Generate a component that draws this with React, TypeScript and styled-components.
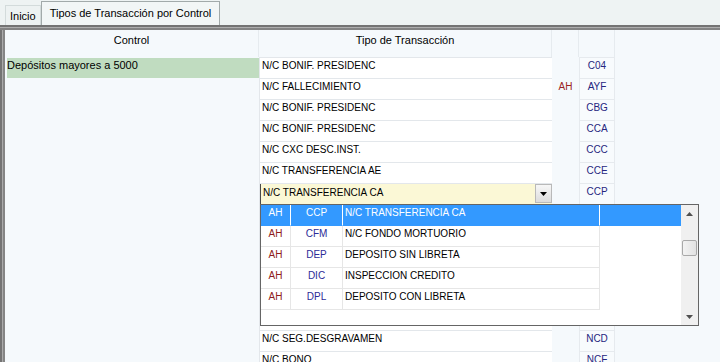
import React from 'react';
import styled, { createGlobalStyle } from 'styled-components';

const Global = createGlobalStyle`
  html, body { margin: 0; padding: 0; background: #eef3f3; overflow: hidden; }
  body { font-family: "Liberation Sans", Arial, sans-serif; font-size: 11px; color: #000; }
  #root { width: 720px; height: 362px; overflow: hidden; }
  * { box-sizing: border-box; }
`;

const Page = styled.div`
  width: 720px;
  height: 362px;
  display: flex;
  flex-direction: column;
  overflow: hidden;
  background: #eef3f3;
`;

const TabStrip = styled.div`
  height: 25px;
  flex-shrink: 0;
  display: flex;
  align-items: flex-end;
  padding-left: 5px;
`;

const Tab = styled.div<{ $active?: boolean }>`
  height: ${(p) => (p.$active ? 24 : 20)}px;
  padding: ${(p) => (p.$active ? '0 8px 2px 8px' : '0 4px')};
  display: flex;
  align-items: center;
  border: 1px solid ${(p) => (p.$active ? '#a2aaaa' : '#d3dbdb')};
  border-bottom: none;
  background: ${(p) => (p.$active ? '#f2f6f6' : '#edf2f2')};
  color: #000;
  font-size: 11px;
  white-space: nowrap;
`;

const Separator = styled.div`
  height: 5px;
  flex-shrink: 0;
  border-top: 2px solid #737373;
  border-bottom: 2px solid #838383;
  background: #adadad;
`;

const Panel = styled.div`
  flex: 1;
  display: flex;
  min-height: 0;
  border-left: 2px solid #747474;
`;

const PanelInnerEdge = styled.div`
  width: 3px;
  flex-shrink: 0;
  border-left: 1px solid #ababab;
  border-right: 2px solid #858585;
`;

const Grid = styled.div`
  flex: 1;
  display: flex;
  flex-direction: column;
  background: #f5f9fc;
  min-width: 0;
`;

const columns = '254px 293px 27px 36px 1fr';

const HeaderRow = styled.div`
  display: grid;
  grid-template-columns: ${columns};
  height: 27px;
  flex-shrink: 0;
`;

const HeaderCell = styled.div<{ $last?: boolean }>`
  text-align: center;
  line-height: 21px;
  font-size: 11px;
  color: #000;
  border-right: ${(p) => (p.$last ? 'none' : '1px solid #e6ebef')};
`;

const Row = styled.div`
  display: grid;
  grid-template-columns: ${columns};
  height: 21px;
  flex-shrink: 0;
`;

const ControlCell = styled.div<{ $highlight?: boolean }>`
  margin-left: 2px;
  border-top: 1px solid transparent;
  background: ${(p) => (p.$highlight ? '#c0dcc0' : 'transparent')};
  background-clip: padding-box;
  font-size: 11px;
  line-height: 15px;
  white-space: nowrap;
  overflow: hidden;
`;

const TipoCell = styled.div<{ $flush?: boolean }>`
  position: relative;
  border-top: 1px solid #e3e7eb;
  border-left: 1px solid #e3e7eb;
  background: #fff;
  padding-left: ${(p) => (p.$flush ? 0 : 2)}px;
  font-size: 10px;
  line-height: 15px;
  white-space: nowrap;
`;

const FlagCell = styled.div`
  text-align: center;
  font-size: 10px;
  line-height: 16px;
  color: #9a1f1f;
  border-top: 1px solid transparent;
`;

const CodeCell = styled.div`
  text-align: center;
  font-size: 10px;
  line-height: 15px;
  color: #262680;
  background: #f8fbfd;
  border-top: 1px solid #e6eaee;
  border-left: 1px solid #e6eaee;
  border-right: 1px solid #e6eaee;
`;

const Filler = styled.div``;

const Editor = styled.div`
  position: relative;
  height: 100%;
  display: flex;
  align-items: center;
  background: #fbf8d6;
  border-left: 1px solid #4a4a4a;
`;

const EditorText = styled.span`
  flex: 1;
  align-self: flex-start;
  padding: 1px 0 0 2px;
  font-size: 10px;
  line-height: 16px;
`;

const DropButton = styled.div`
  width: 17px;
  height: 19px;
  margin-top: -1px;
  display: flex;
  align-items: center;
  justify-content: center;
  background: linear-gradient(#f7f7f7, #dcdcdc);
  border: 1px solid #b9b9b9;
`;

const DropList = styled.div`
  position: absolute;
  top: 100%;
  left: -1px;
  width: 439px;
  height: 122px;
  border: 1px solid #656565;
  background: #fff;
  display: flex;
  z-index: 10;
`;

const ListBody = styled.div`
  flex: 1;
  display: flex;
  flex-direction: column;
`;

const ListRow = styled.div<{ $selected?: boolean }>`
  display: grid;
  grid-template-columns: 30px 52px 257px 1fr;
  height: 21px;
  flex-shrink: 0;
  background: ${(p) => (p.$selected ? '#3399ff' : '#fff')};
`;

type Tone = 'flag' | 'code' | 'text';

const ListCell = styled.div<{ $tone: Tone; $selected?: boolean }>`
  font-size: 10px;
  line-height: 16px;
  white-space: nowrap;
  overflow: hidden;
  text-align: ${(p) => (p.$tone === 'text' ? 'left' : 'center')};
  padding-left: ${(p) => (p.$tone === 'text' ? 2 : 0)}px;
  color: ${(p) =>
    p.$selected ? '#fff' : p.$tone === 'flag' ? '#8e1c1c' : p.$tone === 'code' ? '#2b2b96' : '#000'};
  border-right: 1px solid ${(p) => (p.$selected ? '#ffffff' : '#e6e6e6')};
  border-bottom: 1px solid ${(p) => (p.$selected ? '#3399ff' : '#e6e6e6')};
`;

const ListFill = styled.div``;

const ScrollBar = styled.div`
  width: 17px;
  flex-shrink: 0;
  display: flex;
  flex-direction: column;
  background: #f0f0f0;
`;

const ScrollArrow = styled.div`
  height: 17px;
  flex-shrink: 0;
  display: flex;
  align-items: center;
  justify-content: center;
`;

const Track = styled.div`
  flex: 1;
  padding-top: 18px;
  display: flex;
  justify-content: center;
`;

const Thumb = styled.div`
  width: 15px;
  height: 16px;
  border: 1px solid #a9a9a9;
  border-radius: 2px;
  background: linear-gradient(to right, #f3f3f3, #e2e2e2);
`;

const Caret = ({ up, color = '#000' }: { up?: boolean; color?: string }) => (
  <svg width="7" height="4" viewBox="0 0 7 4">
    {up ? <polygon points="0,4 7,4 3.5,0" fill={color} /> : <polygon points="0,0 7,0 3.5,4" fill={color} />}
  </svg>
);

type GridRow = { tipo: string; flag?: string; code: string; control?: string; editing?: boolean };

const rows: GridRow[] = [
  { tipo: 'N/C BONIF. PRESIDENC', code: 'C04', control: 'Depósitos mayores a 5000' },
  { tipo: 'N/C FALLECIMIENTO', flag: 'AH', code: 'AYF' },
  { tipo: 'N/C BONIF. PRESIDENC', code: 'CBG' },
  { tipo: 'N/C BONIF. PRESIDENC', code: 'CCA' },
  { tipo: 'N/C CXC DESC.INST.', code: 'CCC' },
  { tipo: 'N/C TRANSFERENCIA AE', code: 'CCE' },
  { tipo: 'N/C TRANSFERENCIA CA', code: 'CCP', editing: true },
  { tipo: '', code: '' },
  { tipo: '', code: '' },
  { tipo: '', code: '' },
  { tipo: '', code: '' },
  { tipo: '', code: '' },
  { tipo: '', code: '' },
  { tipo: 'N/C SEG.DESGRAVAMEN', code: 'NCD' },
  { tipo: 'N/C BONO', code: 'NCF' },
];

const options = [
  { flag: 'AH', code: 'CCP', text: 'N/C TRANSFERENCIA CA' },
  { flag: 'AH', code: 'CFM', text: 'N/C FONDO MORTUORIO' },
  { flag: 'AH', code: 'DEP', text: 'DEPOSITO SIN LIBRETA' },
  { flag: 'AH', code: 'DIC', text: 'INSPECCION CREDITO' },
  { flag: 'AH', code: 'DPL', text: 'DEPOSITO CON LIBRETA' },
];

const Dropdown = () => (
  <DropList>
    <ListBody>
      {options.map((o, i) => (
        <ListRow key={o.code} $selected={i === 0}>
          <ListCell $tone="flag" $selected={i === 0}>{o.flag}</ListCell>
          <ListCell $tone="code" $selected={i === 0}>{o.code}</ListCell>
          <ListCell $tone="text" $selected={i === 0}>{o.text}</ListCell>
          <ListFill />
        </ListRow>
      ))}
    </ListBody>
    <ScrollBar>
      <ScrollArrow>
        <Caret up color="#505050" />
      </ScrollArrow>
      <Track>
        <Thumb />
      </Track>
      <ScrollArrow>
        <Caret color="#505050" />
      </ScrollArrow>
    </ScrollBar>
  </DropList>
);

export default function App() {
  return (
    <>
      <Global />
      <Page>
        <TabStrip>
          <Tab>Inicio</Tab>
          <Tab $active>Tipos de Transacción por Control</Tab>
        </TabStrip>
        <Separator />
        <Panel>
          <PanelInnerEdge />
          <Grid>
            <HeaderRow>
              <HeaderCell>Control</HeaderCell>
              <HeaderCell>Tipo de Transacción</HeaderCell>
              <HeaderCell />
              <HeaderCell />
              <HeaderCell $last />
            </HeaderRow>
            {rows.map((r, i) => (
              <Row key={i}>
                <ControlCell $highlight={!!r.control}>{r.control}</ControlCell>
                {r.editing ? (
                  <TipoCell $flush>
                    <Editor>
                      <EditorText>{r.tipo}</EditorText>
                      <DropButton>
                        <Caret />
                      </DropButton>
                      <Dropdown />
                    </Editor>
                  </TipoCell>
                ) : (
                  <TipoCell>{r.tipo}</TipoCell>
                )}
                <FlagCell>{r.flag}</FlagCell>
                <CodeCell>{r.code}</CodeCell>
                <Filler />
              </Row>
            ))}
          </Grid>
        </Panel>
      </Page>
    </>
  );
}
